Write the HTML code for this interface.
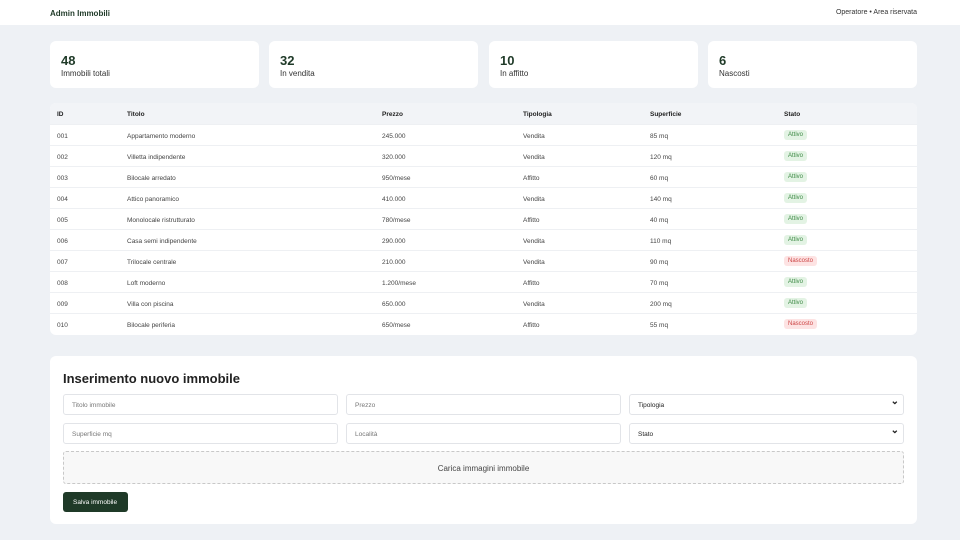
<!DOCTYPE html>
<html><head><meta charset="utf-8"><style>
*{box-sizing:border-box;margin:0;padding:0}
body{width:960px;height:540px;background:#eef1f5;font-family:"Liberation Sans",sans-serif;color:#222;position:relative;overflow:hidden}
.nav{position:absolute;left:0;top:0;width:960px;height:25px;background:#fff;font-size:8px}
.nav .l{position:absolute;left:50px;top:9px;color:#1f3a28;font-weight:bold}
.nav .r{position:absolute;right:43px;top:9px;color:#333;font-size:7px}
.card{position:absolute;background:#fff;border-radius:6px}
.stat{top:41px;height:47px;width:209px}
.stat b{position:absolute;left:11px;top:12px;font-size:13px;color:#1f3a28}
.stat span{position:absolute;left:11px;top:28px;font-size:8px;color:#333}
.tbl{left:50px;top:103px;width:867px;height:232px;overflow:hidden}
.row{position:absolute;left:0;width:867px;height:21px;border-top:1px solid #eef0f3;font-size:6.5px;color:#444}
.row div{position:absolute;top:8px}
.hd{background:#f2f4f7;border:none;font-weight:bold;color:#222}
.b{padding:2px 4px;border-radius:3px;top:5px!important;font-size:6px}
.a{background:#e3f3e4;color:#3d8a45}.n{background:#fde3e3;color:#c44}
.form{left:50px;top:356px;width:867px;height:168px}
.form h2{position:absolute;left:13px;top:15px;font-size:13px;color:#222}
.in{position:absolute;height:21px;border:1px solid #e2e4e8;border-radius:3px;background:#fff;font-size:6.5px;color:#777;padding:7px 8px}
.sel{color:#222}
.sel:after{content:"⌄";position:absolute;right:4px;top:1px;font-size:10px;font-weight:bold}
.up{position:absolute;left:13px;top:95px;width:841px;height:33px;border:1px dashed #c8c8c8;border-radius:3px;background:#f8f8f8;text-align:center;font-size:8px;color:#444;padding-top:12px}
.btn{position:absolute;left:13px;top:136px;width:65px;height:20px;background:#1f3a28;color:#fff;border-radius:3px;font-size:6.5px;padding:7px 0 0 10px}
</style></head><body>
<div class="nav"><div class="l">Admin Immobili</div><div class="r">Operatore • Area riservata</div></div>
<div class="card stat" style="left:50px"><b>48</b><span>Immobili totali</span></div>
<div class="card stat" style="left:269px"><b>32</b><span>In vendita</span></div>
<div class="card stat" style="left:489px"><b>10</b><span>In affitto</span></div>
<div class="card stat" style="left:708px"><b>6</b><span>Nascosti</span></div>
<div class="card tbl">
<div class="row hd" style="top:0"><div style="left:7px">ID</div><div style="left:77px">Titolo</div><div style="left:332px">Prezzo</div><div style="left:473px">Tipologia</div><div style="left:600px">Superficie</div><div style="left:734px">Stato</div></div>
<div class="row" style="top:21px"><div style="left:7px">001</div><div style="left:77px">Appartamento moderno</div><div style="left:332px">245.000</div><div style="left:473px">Vendita</div><div style="left:600px">85 mq</div><div class="b a" style="left:734px">Attivo</div></div>
<div class="row" style="top:42px"><div style="left:7px">002</div><div style="left:77px">Villetta indipendente</div><div style="left:332px">320.000</div><div style="left:473px">Vendita</div><div style="left:600px">120 mq</div><div class="b a" style="left:734px">Attivo</div></div>
<div class="row" style="top:63px"><div style="left:7px">003</div><div style="left:77px">Bilocale arredato</div><div style="left:332px">950/mese</div><div style="left:473px">Affitto</div><div style="left:600px">60 mq</div><div class="b a" style="left:734px">Attivo</div></div>
<div class="row" style="top:84px"><div style="left:7px">004</div><div style="left:77px">Attico panoramico</div><div style="left:332px">410.000</div><div style="left:473px">Vendita</div><div style="left:600px">140 mq</div><div class="b a" style="left:734px">Attivo</div></div>
<div class="row" style="top:105px"><div style="left:7px">005</div><div style="left:77px">Monolocale ristrutturato</div><div style="left:332px">780/mese</div><div style="left:473px">Affitto</div><div style="left:600px">40 mq</div><div class="b a" style="left:734px">Attivo</div></div>
<div class="row" style="top:126px"><div style="left:7px">006</div><div style="left:77px">Casa semi indipendente</div><div style="left:332px">290.000</div><div style="left:473px">Vendita</div><div style="left:600px">110 mq</div><div class="b a" style="left:734px">Attivo</div></div>
<div class="row" style="top:147px"><div style="left:7px">007</div><div style="left:77px">Trilocale centrale</div><div style="left:332px">210.000</div><div style="left:473px">Vendita</div><div style="left:600px">90 mq</div><div class="b n" style="left:734px">Nascosto</div></div>
<div class="row" style="top:168px"><div style="left:7px">008</div><div style="left:77px">Loft moderno</div><div style="left:332px">1.200/mese</div><div style="left:473px">Affitto</div><div style="left:600px">70 mq</div><div class="b a" style="left:734px">Attivo</div></div>
<div class="row" style="top:189px"><div style="left:7px">009</div><div style="left:77px">Villa con piscina</div><div style="left:332px">650.000</div><div style="left:473px">Vendita</div><div style="left:600px">200 mq</div><div class="b a" style="left:734px">Attivo</div></div>
<div class="row" style="top:210px"><div style="left:7px">010</div><div style="left:77px">Bilocale periferia</div><div style="left:332px">650/mese</div><div style="left:473px">Affitto</div><div style="left:600px">55 mq</div><div class="b n" style="left:734px">Nascosto</div></div>
</div>
<div class="card form">
<h2>Inserimento nuovo immobile</h2>
<div class="in" style="left:13px;top:38px;width:275px">Titolo immobile</div>
<div class="in" style="left:296px;top:38px;width:275px">Prezzo</div>
<div class="in sel" style="left:579px;top:38px;width:275px">Tipologia</div>
<div class="in" style="left:13px;top:67px;width:275px">Superficie mq</div>
<div class="in" style="left:296px;top:67px;width:275px">Località</div>
<div class="in sel" style="left:579px;top:67px;width:275px">Stato</div>
<div class="up">Carica immagini immobile</div>
<div class="btn">Salva immobile</div>
</div>
</body></html>
